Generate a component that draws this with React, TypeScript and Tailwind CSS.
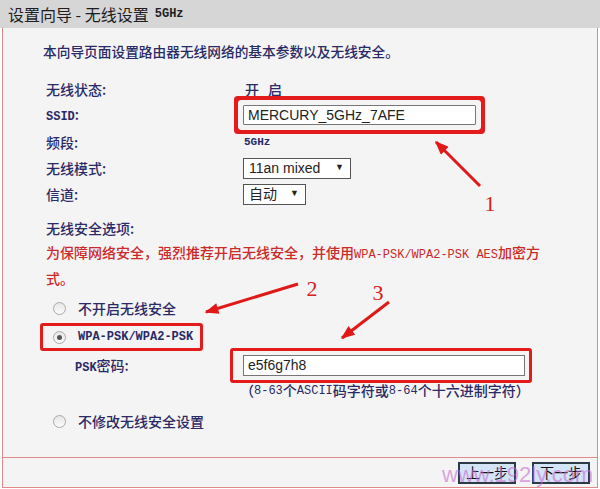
import React from "react";

const cjk = { fontFamily: '"Noto Sans CJK SC", "Liberation Sans", sans-serif' };
const mono = { fontFamily: '"Liberation Mono", "Noto Sans CJK SC", monospace' };

function Radio({ checked }: { checked?: boolean }) {
  return (
    <span className="w-[13px] h-[13px] rounded-full border border-[#a9a9a9] bg-gradient-to-b from-[#e6e6e6] to-[#fbfbfb] flex items-center justify-center shrink-0">
      {checked && <span className="w-[5px] h-[5px] rounded-full bg-[#555]" />}
    </span>
  );
}

function Select({ value, width }: { value: string; width: string }) {
  return (
    <div
      className={`${width} h-[21px] bg-white border border-[#555] flex items-center justify-between pl-[5px] pr-[6px] text-[14px] text-[#222] font-normal`}
      style={{ fontFamily: '"Liberation Sans", "Noto Sans CJK SC", sans-serif' }}
    >
      <span>{value}</span>
      <span className="text-[9px]">▼</span>
    </div>
  );
}

export default function App() {
  const label = "w-[197px] shrink-0";
  return (
    <div className="w-[600px] h-[489px] relative bg-white overflow-hidden text-[#2a2a66] text-[14px] font-medium" style={cjk}>
      <div className="h-[28px] bg-[#d6d6d6] flex items-center pl-[8px] text-[16px] text-[#1e1e1e] font-normal">
        设置向导 - 无线设置 <span className="ml-[6px] text-[12px] font-bold" style={mono}>5GHz</span>
      </div>

      <div className="ml-[2px] w-[596px] h-[460px] bg-[#f4f4f4] border-x border-b border-[#e08a8a] flex flex-col">
        <div className="pl-[40px] flex flex-col">
          <div className="mt-[12px] h-[22px] flex items-center text-[13.7px]">本向导页面设置路由器无线网络的基本参数以及无线安全。</div>

          <div className="mt-[16px] h-[22px] flex items-center pl-[3px]">
            <span className={label}>无线状态:</span>
            <span className="pl-[2px]">开<span className="ml-[9px]">启</span></span>
          </div>

          <div className="mt-[4px] h-[22px] flex items-center pl-[3px]">
            <span className={label}>
              <span className="font-bold text-[12px]" style={mono}>SSID</span>:
            </span>
            <div
              className="w-[233px] h-[20px] bg-white border border-[#777] flex items-center pl-[4px] text-[14px] text-[#222] font-normal shadow-[0_0_0_5px_#f4f4f4,0_0_0_9px_#e31b1b] rounded-[1px]"
              style={{ fontFamily: '"Liberation Sans", sans-serif' }}
            >
              MERCURY_5GHz_7AFE
            </div>
          </div>

          <div className="mt-[5px] h-[22px] flex items-center pl-[3px]">
            <span className={label}>频段:</span>
            <span className="pl-[1px] text-[11px] font-bold" style={mono}>5GHz</span>
          </div>

          <div className="mt-[4px] h-[22px] flex items-center pl-[3px]">
            <span className={label}>无线模式:</span>
            <Select value="11an mixed" width="w-[108px]" />
          </div>

          <div className="mt-[4px] h-[22px] flex items-center pl-[3px]">
            <span className={label}>信道:</span>
            <Select value="自动" width="w-[63px]" />
          </div>

          <div className="mt-[12px] h-[22px] flex items-center pl-[3px]">无线安全选项:</div>

          <div className="mt-[2px] pl-[3px] leading-[23px] text-[#cc2a2a]">
            为保障网络安全，强烈推荐开启无线安全，并使用
            <span className="text-[12px]" style={mono}>WPA-PSK/WPA2-PSK AES</span>
            加密方
            <br />
            式。
          </div>

          <div className="mt-[7px] h-[22px] flex items-center pl-[10px] gap-[12px]">
            <Radio />
            <span>不开启无线安全</span>
          </div>

          <div className="mt-[4px] ml-[-3px] w-[163px] h-[28px] border-[3px] border-[#e31b1b] rounded-[3px] flex items-center pl-[10px] gap-[12px]">
            <Radio checked />
            <span className="text-[12px] font-bold" style={mono}>WPA-PSK/WPA2-PSK</span>
          </div>

          <div className="mt-[-3px] h-[35px] flex items-center pl-[32px]">
            <span className="w-[155px] shrink-0">
              <span className="text-[12px] font-bold" style={mono}>PSK</span>密码:
            </span>
            <div className="w-[302px] h-[35px] border-[3px] border-[#e31b1b] rounded-[3px] pl-[10px] pr-[4px] py-[4px]">
              <div
                className="w-full h-[21px] bg-white border border-[#777] flex items-center pl-[4px] text-[14px] text-[#222] font-normal"
                style={{ fontFamily: '"Liberation Sans", sans-serif' }}
              >
                e5f6g7h8
              </div>
            </div>
          </div>

          <div className="h-[15px] flex items-center ml-[197px] text-[14px] whitespace-nowrap">
            （<span className="text-[12px]" style={mono}>8-63</span>个<span className="text-[12px]" style={mono}>ASCII</span>码字符或<span className="text-[12px]" style={mono}>8-64</span>个十六进制字符）
          </div>

          <div className="mt-[12px] h-[22px] flex items-center pl-[10px] gap-[12px]">
            <Radio />
            <span>不修改无线安全设置</span>
          </div>
        </div>

        <div className="mt-auto h-[30px] border-t border-[#e08a8a] flex items-center justify-end gap-[16px] pr-[7px]">
          <button className="w-[58px] h-[22px] bg-[#d4e4f7] border-2 border-[#2c3a48] text-[14px] text-[#111] font-normal flex items-center justify-center">上一步</button>
          <button className="w-[58px] h-[22px] bg-[#d4e4f7] border-2 border-[#2c3a48] text-[14px] text-[#111] font-normal flex items-center justify-center">下一步</button>
        </div>
      </div>

      <svg className="absolute inset-0 pointer-events-none" width="600" height="489">
        <defs>
          <marker id="ah" viewBox="0 0 10 8" refX="9" refY="4" markerWidth="15" markerHeight="11" markerUnits="userSpaceOnUse" orient="auto">
            <path d="M0,0 L10,4 L0,8 z" fill="#e01818" />
          </marker>
        </defs>
        <line x1="480" y1="186" x2="436" y2="142" stroke="#e01818" strokeWidth="3" markerEnd="url(#ah)" />
        <line x1="298" y1="284" x2="206" y2="312" stroke="#e01818" strokeWidth="3" markerEnd="url(#ah)" />
        <line x1="389" y1="302" x2="342" y2="338" stroke="#e01818" strokeWidth="3" markerEnd="url(#ah)" />
        <g fill="#d42020" fontSize="22" fontFamily='"Liberation Serif", serif' textAnchor="middle">
          <text x="490" y="211">1</text>
          <text x="312" y="296">2</text>
          <text x="378" y="300">3</text>
        </g>
      </svg>

      <div
        className="absolute left-[442px] top-[458px] text-[22px] text-[#c46fcf] opacity-60 font-normal pointer-events-none"
        style={{ fontFamily: '"Liberation Sans", sans-serif' }}
      >
        www.192ly.com
      </div>
    </div>
  );
}
